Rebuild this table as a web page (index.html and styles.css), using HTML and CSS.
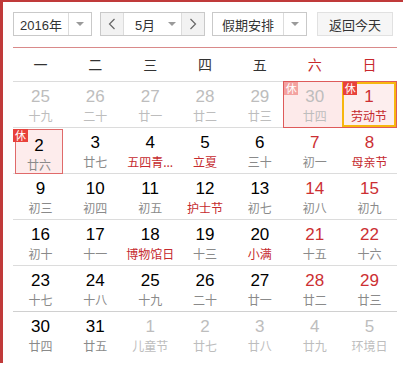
FILE: index.html
```html
<!DOCTYPE html>
<html lang="zh-CN">
<head>
<meta charset="utf-8">
<title>万年历</title>
<link rel="stylesheet" href="styles.css">
</head>
<body>
<div class="cal">
  <div class="bar">
    <div class="sel year"><span class="txt">2016年</span><span class="dd"><i class="tri"></i></span></div>
    <div class="sel month">
      <span class="nav"><svg width="8" height="12" viewBox="0 0 8 12"><polyline points="6.5,1 1.5,6 6.5,11" fill="none" stroke="#666" stroke-width="1.2"/></svg></span>
      <span class="txt">5月</span><span class="mdd"><i class="tri"></i></span>
      <span class="nav r"><svg width="8" height="12" viewBox="0 0 8 12"><polyline points="1.5,1 6.5,6 1.5,11" fill="none" stroke="#666" stroke-width="1.2"/></svg></span>
    </div>
    <div class="sel hol"><span class="txt">假期安排</span><span class="dd"><i class="tri"></i></span></div>
    <div class="btn">返回今天</div>
  </div>
  <div class="head">
    <span>一</span><span>二</span><span>三</span><span>四</span><span>五</span><span class="we">六</span><span class="we">日</span>
  </div>
  <div class="week">
    <div class="c out"><span class="n">25</span><span class="l">十九</span></div>
    <div class="c out"><span class="n">26</span><span class="l">二十</span></div>
    <div class="c out"><span class="n">27</span><span class="l">廿一</span></div>
    <div class="c out"><span class="n">28</span><span class="l">廿二</span></div>
    <div class="c out"><span class="n">29</span><span class="l">廿三</span></div>
    <div class="c out hl"><span class="badge fade">休</span><span class="n">30</span><span class="l">廿四</span></div>
    <div class="c hr today"><span class="badge">休</span><span class="n red">1</span><span class="l red">劳动节</span></div>
  </div>
  <div class="week">
    <div class="c"><div class="box"><span class="badge">休</span><span class="n">2</span><span class="l">廿六</span></div></div>
    <div class="c"><span class="n">3</span><span class="l">廿七</span></div>
    <div class="c"><span class="n">4</span><span class="l red">五四青...</span></div>
    <div class="c"><span class="n">5</span><span class="l red">立夏</span></div>
    <div class="c"><span class="n">6</span><span class="l">三十</span></div>
    <div class="c"><span class="n red">7</span><span class="l">初一</span></div>
    <div class="c"><span class="n red">8</span><span class="l red">母亲节</span></div>
  </div>
  <div class="week">
    <div class="c"><span class="n">9</span><span class="l">初三</span></div>
    <div class="c"><span class="n">10</span><span class="l">初四</span></div>
    <div class="c"><span class="n">11</span><span class="l">初五</span></div>
    <div class="c"><span class="n">12</span><span class="l red">护士节</span></div>
    <div class="c"><span class="n">13</span><span class="l">初七</span></div>
    <div class="c"><span class="n red">14</span><span class="l">初八</span></div>
    <div class="c"><span class="n red">15</span><span class="l">初九</span></div>
  </div>
  <div class="week">
    <div class="c"><span class="n">16</span><span class="l">初十</span></div>
    <div class="c"><span class="n">17</span><span class="l">十一</span></div>
    <div class="c"><span class="n">18</span><span class="l red">博物馆日</span></div>
    <div class="c"><span class="n">19</span><span class="l">十三</span></div>
    <div class="c"><span class="n">20</span><span class="l red">小满</span></div>
    <div class="c"><span class="n red">21</span><span class="l">十五</span></div>
    <div class="c"><span class="n red">22</span><span class="l">十六</span></div>
  </div>
  <div class="week">
    <div class="c"><span class="n">23</span><span class="l">十七</span></div>
    <div class="c"><span class="n">24</span><span class="l">十八</span></div>
    <div class="c"><span class="n">25</span><span class="l">十九</span></div>
    <div class="c"><span class="n">26</span><span class="l">二十</span></div>
    <div class="c"><span class="n">27</span><span class="l">廿一</span></div>
    <div class="c"><span class="n red">28</span><span class="l">廿二</span></div>
    <div class="c"><span class="n red">29</span><span class="l">廿三</span></div>
  </div>
  <div class="week">
    <div class="c"><span class="n">30</span><span class="l">廿四</span></div>
    <div class="c"><span class="n">31</span><span class="l">廿五</span></div>
    <div class="c out"><span class="n">1</span><span class="l">儿童节</span></div>
    <div class="c out"><span class="n">2</span><span class="l">廿七</span></div>
    <div class="c out"><span class="n">3</span><span class="l">廿八</span></div>
    <div class="c out"><span class="n">4</span><span class="l">廿九</span></div>
    <div class="c out"><span class="n">5</span><span class="l">环境日</span></div>
  </div>
</div>
</body>
</html>
```
FILE: styles.css
```css
html, body {
  margin: 0;
  padding: 0;
  background: #fff;
}
.cal {
  border-left: 3px solid #c03a3a;
  border-top: 2px solid #c03a3a;
  padding: 10px 6px 0 10px;
  height: 363px;
  box-sizing: border-box;
  font-family: "Liberation Sans", Arial, "Noto Sans CJK SC", sans-serif;
  color: #000;
}
.bar {
  display: flex;
  height: 24px;
  font-size: 13px;
  color: #333;
}
.sel {
  display: flex;
  align-items: stretch;
  border: 1px solid #c9c9c9;
  box-sizing: border-box;
  height: 24px;
  background: #fff;
}
.sel .txt {
  display: flex;
  align-items: center;
  font-family: "Liberation Sans", Arial, "Noto Sans CJK SC", sans-serif;
}
.year { width: 79px; }
.year .txt { width: 54px; justify-content: center; }
.dd {
  flex: 1;
  border-left: 1px solid #dcdcdc;
  display: flex;
  align-items: center;
  justify-content: center;
}
.tri {
  width: 0;
  height: 0;
  border-left: 4px solid transparent;
  border-right: 4px solid transparent;
  border-top: 4px solid #9a9a9a;
}
.month { width: 105px; margin-left: 8px; }
.nav {
  width: 22px;
  background: #f2f2f2;
  display: flex;
  align-items: center;
  justify-content: center;
  border-right: 1px solid #dcdcdc;
}
.nav.r { border-right: none; border-left: 1px solid #dcdcdc; }
.month .txt { width: 34px; justify-content: center; padding-left: 4px; }
.mdd {
  flex: 1;
  display: flex;
  align-items: center;
  justify-content: center;
}
.hol { width: 95px; margin-left: 7px; }
.hol .txt { width: 70px; justify-content: center; }
.btn {
  margin-left: 10px;
  width: 76px;
  height: 24px;
  box-sizing: border-box;
  border: 1px solid #e1e1e1;
  background: #f6f6f6;
  display: flex;
  align-items: center;
  justify-content: center;
  color: #333;
}
.head {
  margin-top: 11px;
  border-top: 1px solid #d98a8a;
  display: grid;
  grid-template-columns: repeat(7, 1fr);
  height: 33px;
  line-height: 32px;
  font-size: 14px;
  color: #333;
  text-align: center;
  font-family: "Noto Sans CJK SC", sans-serif;
}
.head .we { color: #c8282c; }
.week {
  display: grid;
  grid-template-columns: repeat(7, 1fr);
  border-top: 1px solid #dcdcdc;
  height: 46px;
  box-sizing: border-box;
}
.week:last-child { border-top-color: #d0d0d0; }
.c {
  position: relative;
  text-align: center;
  padding-top: 4px;
}
.n {
  display: block;
  font-size: 17px;
  line-height: 22px;
  font-family: "Liberation Sans", Arial, sans-serif;
}
.l {
  display: block;
  font-style: normal;
  font-size: 12px;
  line-height: 16px;
  color: #8a8a8a;
  font-family: "Noto Sans CJK SC", sans-serif;
  white-space: nowrap;
}
.red { color: #cc2f33; }
.l.red { color: #c52a2e; }
.out .n, .out .l { color: #bdbdbd; }
.hl {
  margin: -1px 0 -1px -4px;
  padding-left: 3px;
  border: 1px solid #de5a5a;
  border-right: none;
  background: #fdeaea;
}
.hr {
  margin: -1px 0 -1px 0;
  border: 1px solid #de5a5a;
  border-left: none;
  background: #fdeeee;
  box-shadow: inset 0 0 0 2px #f7b70f;
  padding-top: 4px;
}
.badge {
  position: absolute;
  left: 0;
  top: 0;
  width: 14px;
  height: 13px;
  line-height: 13px;
  font-size: 11px;
  color: #fff;
  background: #e8413b;
  text-align: center;
  font-family: "Noto Sans CJK SC", sans-serif;
}
.badge.fade { background: #f3a2a0; }
.today .badge { left: 1px; }
.box {
  position: relative;
  margin: -3px 0 -1px 2px;
  width: 48px;
  height: 45px;
  box-sizing: border-box;
  border: 1px solid #e06a6a;
  background: #fdecec;
  padding-top: 5px;
}
.box .badge { left: -3px; top: -1px; width: 15px; }
```
